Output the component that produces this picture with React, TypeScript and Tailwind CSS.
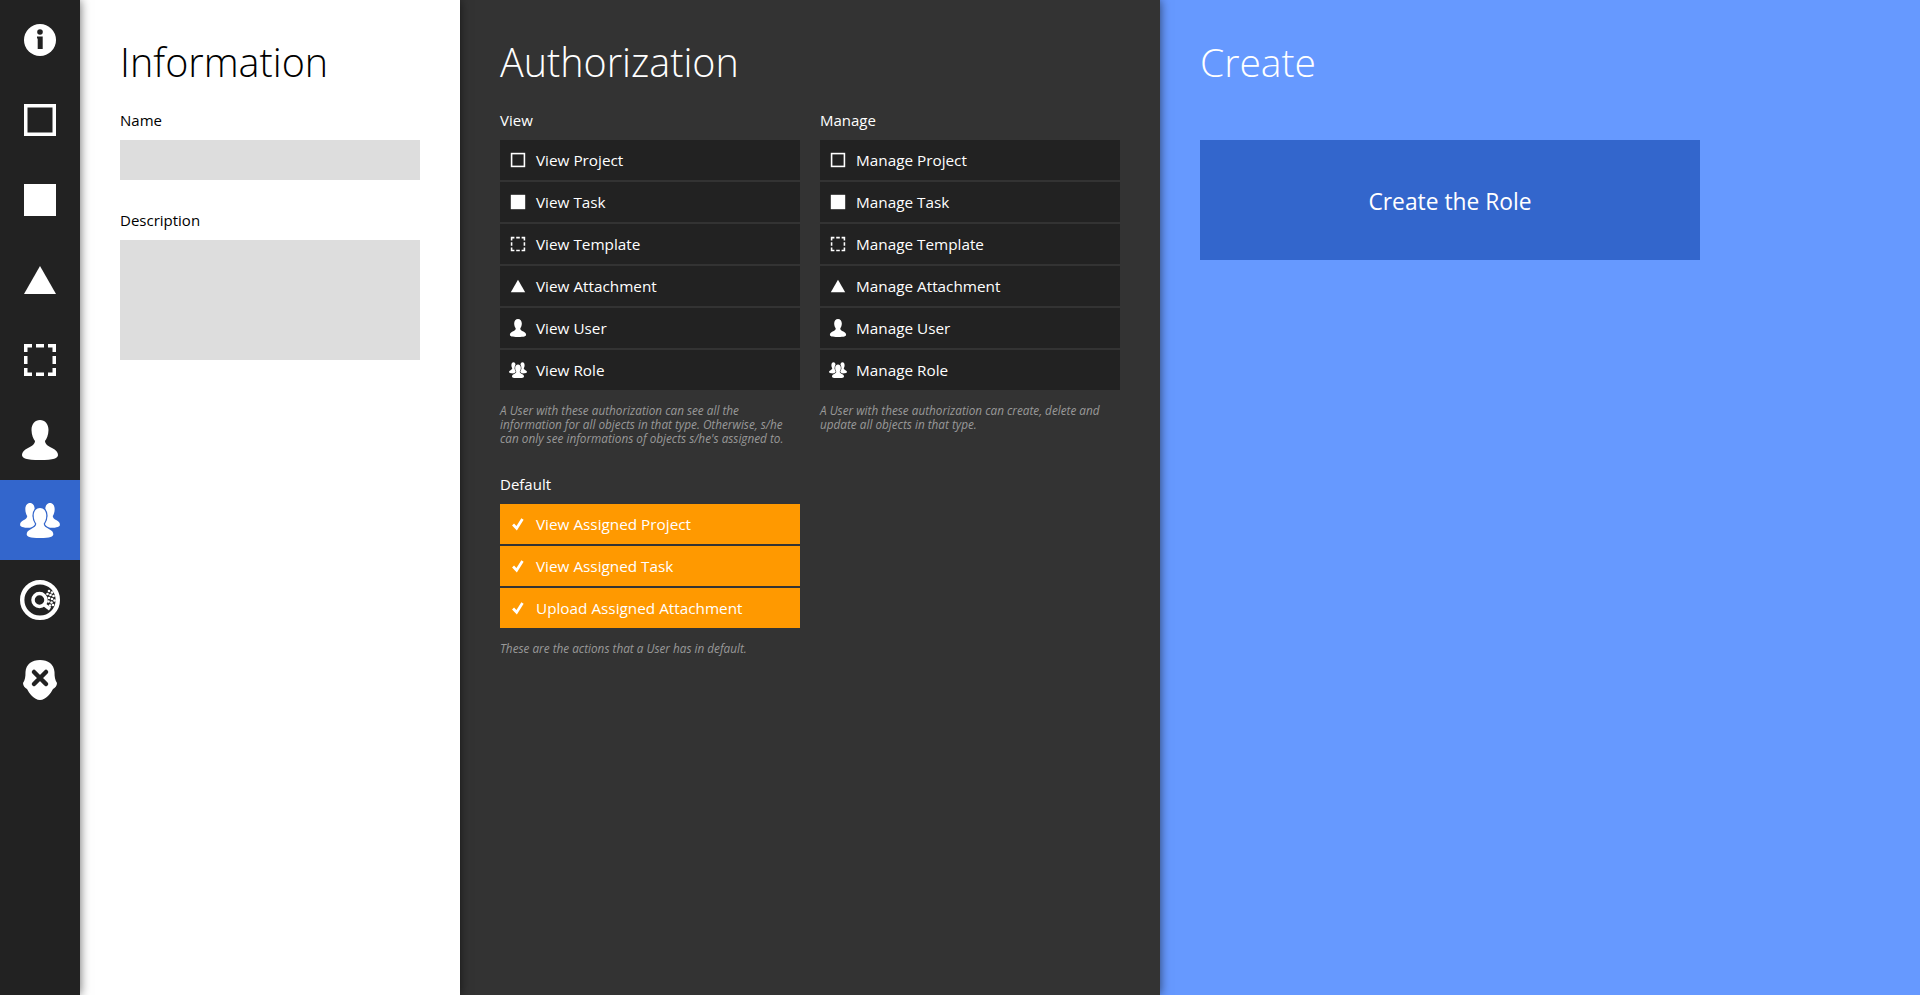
const userPath = "M20 0C25 0 28.5 4 28.5 10C28.5 15 26.5 19 25 21C25 24 28 26 32 28C36 30 38 32 38 35C38 38 34 40 20 40C6 40 2 38 2 35C2 32 4 30 8 28C12 26 15 24 15 21C13.5 19 11.5 15 11.5 10C11.5 4 15 0 20 0Z";

const dots = [
    [29, 11], [32, 12.5], [27.500, 14], [30.500, 15], [33.500, 16], [29, 18], [32, 19], [34.500, 20.500],
    [28.500, 21.500], [31.500, 22.500], [30, 25.500], [33, 25],
];

type IconProps = { name: string; size?: number; bg?: string };

const Icon = ({ name, size = 40, bg = "#222222" }: IconProps) => {
    return (
        <svg width={size} height={size} viewBox="0 0 40 40" fill="#fff" className="shrink-0">
            {name === "info" && (
                <>
                    <circle cx="20" cy="20" r="16" />
                    <circle cx="20" cy="12" r="2.8" fill={bg} />
                    <path d="M17 16.500H22.700V29H17.700V18.500H17Z" fill={bg} />
                </>
            )}
            {name === "project" && <rect x="5.750" y="5.750" width="28.500" height="28.500" fill="none" stroke="#fff" strokeWidth="3.500" />}
            {name === "task" && <rect x="4" y="4" width="32" height="32" />}
            {name === "attachment" && <path d="M20 6L36 34H4Z" />}
            {name === "template" && (
                <path
                    d="M5.750 12V5.750H12M16 5.750H24M28 5.750H34.250V12M34.250 16V24M34.250 28V34.250H28M24 34.250H16M12 34.250H5.750V28M5.750 24V16"
                    fill="none"
                    stroke="#fff"
                    strokeWidth="3.500"
                />
            )}
            {name === "user" && <path d={userPath} />}
            {name === "role" && (
                <>
                    <path d={userPath} transform="translate(-1 3) scale(0.55 0.62)" />
                    <path d={userPath} transform="translate(19 3) scale(0.55 0.62)" />
                    <path d={userPath} transform="translate(5.200 8) scale(0.74 0.75)" stroke={bg} strokeWidth="3.500" paintOrder="stroke" />
                </>
            )}
            {name === "target" && (
                <>
                    <circle cx="20" cy="20" r="17.800" fill="none" stroke="#fff" strokeWidth="4.400" />
                    <circle cx="19.500" cy="20" r="6.500" fill="none" stroke="#fff" strokeWidth="3.500" />
                    <path d="M24 24.500L30 29" stroke="#fff" strokeWidth="3.500" />
                    {dots.map(([cx, cy]) => (
                        <circle key={`${cx}-${cy}`} cx={cx} cy={cy} r="1.300" />
                    ))}
                </>
            )}
            {name === "remove" && (
                <>
                    <path d="M20 0C28 0 34 4 34.500 12C34.500 17 35 20 37 23C37 26 35 28 33 29C31 33 26 40 20 40C14 40 9 33 7 29C5 28 3 26 3 23C5 20 5.500 17 5.500 12C6 4 12 0 20 0Z" />
                    <path d="M14 12L26 24M26 12L14 24" stroke={bg} strokeWidth="4.500" strokeLinecap="round" />
                </>
            )}
            {name === "check" && <path d="M9 21L17 29.500L30 9" fill="none" stroke="#fff" strokeWidth="6" />}
        </svg>
    );
};

const sideItems = ["info", "project", "task", "attachment", "template", "user", "role", "target", "remove"];

const kinds = [
    { icon: "project", label: "Project" },
    { icon: "task", label: "Task" },
    { icon: "template", label: "Template" },
    { icon: "attachment", label: "Attachment" },
    { icon: "user", label: "User" },
    { icon: "role", label: "Role" },
];

const defaults = ["View Assigned Project", "View Assigned Task", "Upload Assigned Attachment"];

const Row = ({ icon, label, active }: { icon: string; label: string; active?: boolean }) => {
    return (
        <div className={`flex h-10 items-center gap-[9px] pl-[9px] text-[15.300px] text-white ${active ? "bg-[#ff9900]" : "bg-[#222222]"}`}>
            <Icon name={icon} size={18} bg="#222222" />
            <span>{label}</span>
        </div>
    );
};

const App = () => {
    return (
        <div className="flex h-screen w-full overflow-hidden font-['Open_Sans',sans-serif]">
            <nav className="relative z-30 w-20 shrink-0 bg-[#222222] shadow-[0_0_10px_rgba(0,0,0,0.6)]">
                {sideItems.map((item) => (
                    <div key={item} className={`flex h-20 items-center justify-center ${item === "role" ? "bg-[#3366cc]" : ""}`}>
                        <Icon name={item} bg={item === "role" ? "#3366cc" : "#222222"} />
                    </div>
                ))}
            </nav>

            <section className="relative z-20 w-[380px] shrink-0 bg-white p-10 text-black shadow-[0_0_10px_rgba(0,0,0,0.6)]">
                <h1 className="mb-[26px] text-[39.500px] leading-[44px] font-light">Information</h1>
                <label className="mb-[10px] block text-[15px] leading-5">Name</label>
                <input className="mb-[30px] block h-10 w-[300px] bg-[#dddddd]" />
                <label className="mb-[10px] block text-[15px] leading-5">Description</label>
                <textarea className="block h-[120px] w-[300px] resize-none bg-[#dddddd]" />
            </section>

            <section className="relative z-10 w-[700px] shrink-0 bg-[#333333] p-10 text-white shadow-[0_0_10px_rgba(0,0,0,0.6)]">
                <h1 className="mb-[26px] text-[39.500px] leading-[44px] font-light">Authorization</h1>
                <div className="grid w-[620px] grid-cols-2 gap-x-5">
                    <div>
                        <h2 className="mb-[10px] text-[15px] leading-5">View</h2>
                        <div className="flex flex-col gap-[2px]">
                            {kinds.map((kind) => (
                                <Row key={kind.label} icon={kind.icon} label={`View ${kind.label}`} />
                            ))}
                        </div>
                        <p className="mt-[13px] text-[11.750px] leading-[14px] text-[#999999] italic">
                            A User with these authorization can see all the information for all objects in that type. Otherwise, s/he can only see informations of objects s/he's assigned to.
                        </p>
                    </div>
                    <div>
                        <h2 className="mb-[10px] text-[15px] leading-5">Manage</h2>
                        <div className="flex flex-col gap-[2px]">
                            {kinds.map((kind) => (
                                <Row key={kind.label} icon={kind.icon} label={`Manage ${kind.label}`} />
                            ))}
                        </div>
                        <p className="mt-[13px] text-[11.750px] leading-[14px] text-[#999999] italic">
                            A User with these authorization can create, delete and update all objects in that type.
                        </p>
                    </div>
                </div>
                <div className="mt-[29px] w-[300px]">
                    <h2 className="mb-[10px] text-[15px] leading-5">Default</h2>
                    <div className="flex flex-col gap-[2px]">
                        {defaults.map((label) => (
                            <Row key={label} icon="check" label={label} active />
                        ))}
                    </div>
                    <p className="mt-[13px] text-[11.750px] leading-[14px] text-[#999999] italic">These are the actions that a User has in default.</p>
                </div>
            </section>

            <section className="flex-1 bg-[#6699ff] p-10 text-white">
                <h1 className="mb-[56px] text-[39px] leading-[44px] font-light">Create</h1>
                <button className="block h-[120px] w-[500px] bg-[#3366cc] pt-1 text-[22.800px] text-white">Create the Role</button>
            </section>
        </div>
    );
};

export default App;
